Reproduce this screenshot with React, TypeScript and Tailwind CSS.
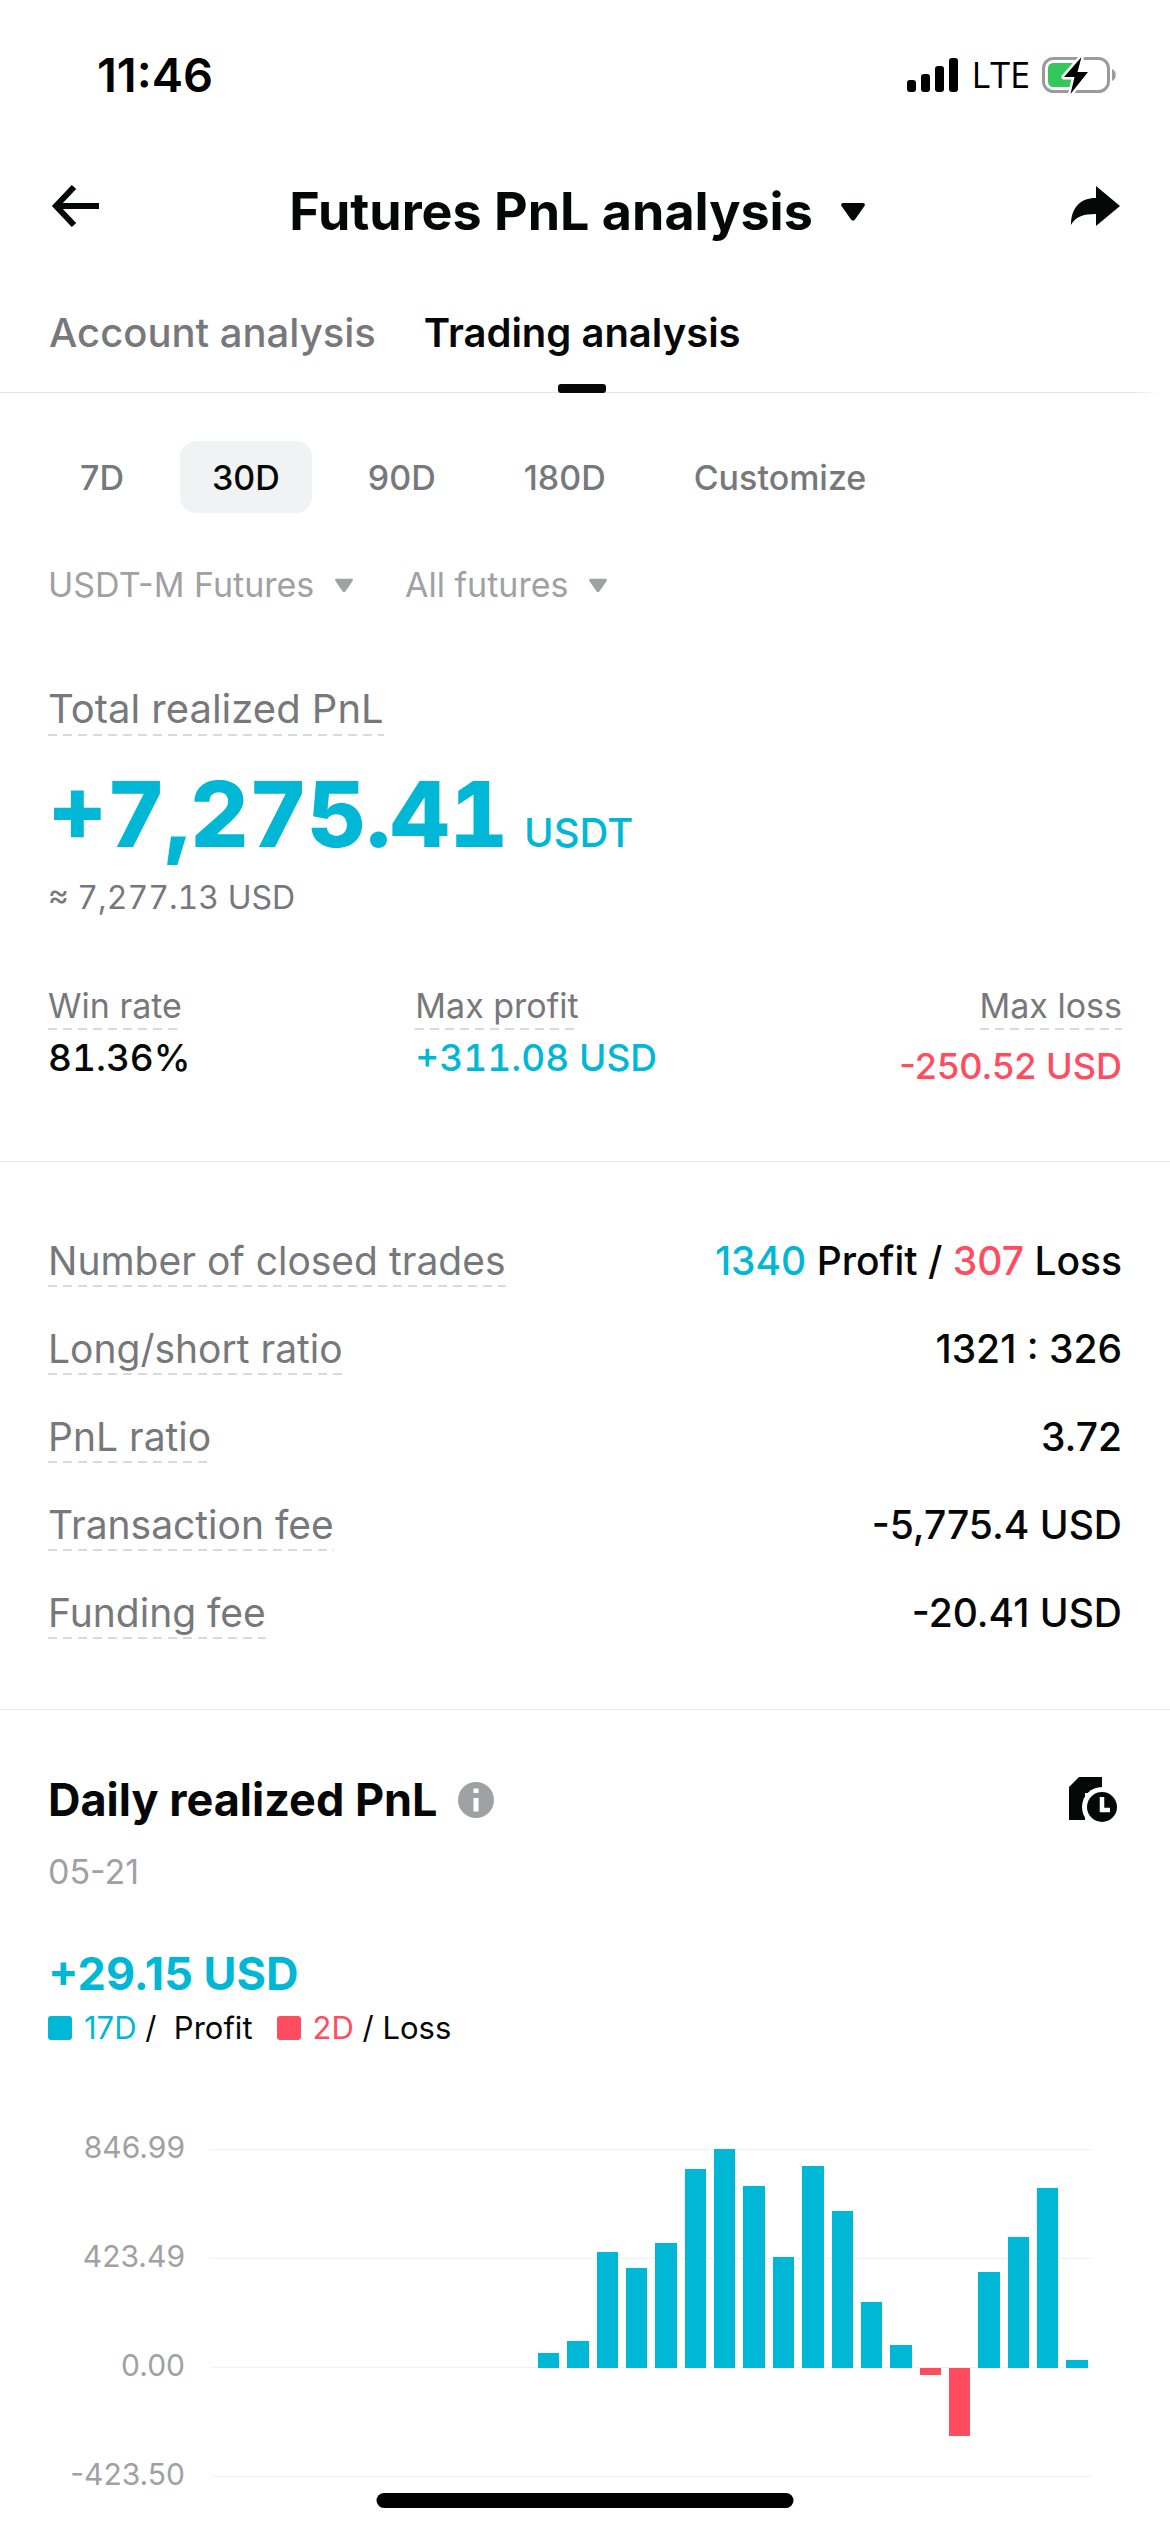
import React, { useState } from "react";
import clsx from "clsx";

const periods = ["7D", "30D", "90D", "180D", "Customize"];

const details = [
  { label: "Long/short ratio", value: "1321 : 326" },
  { label: "PnL ratio", value: "3.72" },
  { label: "Transaction fee", value: "-5,775.4 USD" },
  { label: "Funding fee", value: "-20.41 USD" },
];

const MAX = 846.99;
const axis = ["846.99", "423.49", "0.00", "-423.50"];

// last 30 days, oldest first
const daily = [
  0, 0, 0, 0, 0, 0, 0, 0, 0, 0, 0,
  57.1, 106.2, 447.4, 388.1, 482.5, 768.3, 846.99, 702.4, 428.2, 781.2,
  608, 253.6, 90.5, -26, -262.6, 370, 505.8, 696, 29.15,
];

function Caret({ className }: { className?: string }) {
  return (
    <svg viewBox="0 0 24 18" className={className} fill="currentColor" aria-hidden="true">
      <path d="M2 0h20c1.600 0 2.400 1.600 1.500 3L14 16.500c-1 1.500-3 1.500-4 0L.5 3C-.4 1.600.4 0 2 0z" />
    </svg>
  );
}

function Hint({ children, className }: { children: React.ReactNode; className?: string }) {
  return (
    <div className={clsx("w-fit text-[#77787c]", className)}>
      {children}
      <div className="h-[2px] bg-[repeating-linear-gradient(90deg,#d9dadd_0_9px,transparent_9px_15px)]" />
    </div>
  );
}

function StatusBar() {
  return (
    <div className="flex h-[150px] items-center justify-between pr-[52px] pl-[97px] text-black">
      <span className="text-[47px] leading-[48px] font-semibold">11:46</span>
      <div className="flex items-center">
        <svg className="h-[34px] w-[52px]" viewBox="0 0 52 34" aria-hidden="true">
          <rect x="0" y="22" width="9" height="12" rx="3" />
          <rect x="14" y="16" width="9" height="18" rx="3" />
          <rect x="28" y="8" width="9" height="26" rx="3" />
          <rect x="42" y="0" width="9" height="34" rx="3" />
        </svg>
        <span className="ml-3 font-['Open_Sans',sans-serif] text-[36px] leading-[48px] font-medium">LTE</span>
        <svg className="ml-3 h-[38px] w-[76px]" viewBox="0 0 76 38" aria-hidden="true">
          <rect x="1.500" y="2.500" width="65" height="33" rx="10" fill="none" stroke="#9b9b9d" strokeWidth="3" />
          <path d="M70 13c5 1.500 5 10.500 0 12z" fill="#9b9b9d" />
          <path d="M12 7h24v24H12c-4 0-6-2-6-6V13c0-4 2-6 6-6z" fill="#34c759" />
          <path d="M39.500 1 22 21h10.500l-4 17L46 16H35.500z" fill="#000" stroke="#fff" strokeWidth="5" strokeLinejoin="round" paintOrder="stroke" />
        </svg>
      </div>
    </div>
  );
}

function Chart() {
  return (
    <div className="mt-[82px] flex">
      <div className="w-[137px] shrink-0 text-right text-[30px] text-[#9fa1a5]">
        {axis.map((tick) => (
          <div key={tick} className="h-[109px] leading-[38px]">{tick}</div>
        ))}
      </div>
      <div className="relative mt-[21px] mr-[30px] ml-[26px] h-[328px] flex-1">
        <div className="absolute inset-0 flex flex-col justify-between">
          {axis.map((tick) => (
            <div key={tick} className="h-px bg-[#f0f1f3]" />
          ))}
        </div>
        <div className="relative flex h-full">
          {daily.map((value, i) => (
            <div key={i} className="flex flex-1 flex-col px-[4px]">
              <div className="flex h-[219px] items-end">
                {value > 0 && (
                  <div className="w-full bg-[#00b8d6]" style={{ height: `${(value / MAX) * 100}%` }} />
                )}
              </div>
              <div className="h-[109px]">
                {value < 0 && (
                  <div className="w-full bg-[#ff4c5f]" style={{ height: `${(-value / MAX) * 200}%` }} />
                )}
              </div>
            </div>
          ))}
        </div>
      </div>
    </div>
  );
}

export default function App() {
  const [tab, setTab] = useState("Trading analysis");
  const [period, setPeriod] = useState("30D");

  return (
    <main className="min-h-screen bg-white font-['Inter',sans-serif] text-[#060808]">
      <StatusBar />

      <header className="flex h-[124px] items-center justify-between px-[50px]">
        <button type="button" aria-label="Back" className="mb-3">
          <svg className="h-[42px] w-[49px]" viewBox="0 0 49 42" fill="none" stroke="currentColor" strokeWidth="6" aria-hidden="true">
            <path d="M49 21H7M24 2 6 21l18 19" />
          </svg>
        </button>
        <h1 className="text-[52px] leading-[64px] font-bold">
          <button type="button" className="flex items-center gap-7 pr-4">
            Futures PnL analysis
            <Caret className="h-[18px] w-[24px]" />
          </button>
        </h1>
        <button type="button" aria-label="Share" className="mb-3">
          <svg className="h-[40px] w-[49px]" viewBox="0 0 49 40" fill="currentColor" aria-hidden="true">
            <path d="M25 0 49 20 25 40V28C12 28 4 31 0 39 0 22 9 12 25 12z" />
          </svg>
        </button>
      </header>

      <nav role="tablist" className="flex h-[118px] gap-12 px-[49px] text-[40px]">
        {["Account analysis", "Trading analysis"].map((name) => (
          <button
            key={name}
            type="button"
            role="tab"
            aria-selected={tab === name}
            onClick={() => setTab(name)}
            className={clsx("relative", tab === name ? "font-semibold" : "font-medium text-[#77787c]")}
          >
            {name}
            {tab === name && (
              <span className="absolute -bottom-px left-1/2 h-[9px] w-12 -translate-x-1/2 rounded-[3px] bg-[#060808]" />
            )}
          </button>
        ))}
      </nav>
      <div className="h-px bg-linear-to-r from-[#e4e5e6] from-97% to-transparent to-99%" />

      <section className="border-b border-[#e9eaeb] px-12 pb-[71px]">
        <div className="mt-12 flex gap-6">
          {periods.map((name) => (
            <button
              key={name}
              type="button"
              aria-pressed={period === name}
              onClick={() => setPeriod(name)}
              className={clsx(
                "h-[72px] rounded-2xl px-8 text-[34px] font-medium",
                period === name ? "bg-[#f1f2f4]" : "text-[#77787c]"
              )}
            >
              {name}
            </button>
          ))}
        </div>

        <div className="mt-12 flex gap-[52px] text-[34px] leading-[48px] text-[#9fa1a5]">
          <label className="flex items-center gap-5">
            <select aria-label="Futures type" className="h-12 appearance-none bg-transparent">
              <option>USDT-M Futures</option>
            </select>
            <Caret className="h-[15px] w-[18px]" />
          </label>
          <label className="flex items-center gap-5">
            <select aria-label="Contract" className="h-12 appearance-none bg-transparent">
              <option>All futures</option>
            </select>
            <Caret className="h-[15px] w-[18px]" />
          </label>
        </div>

        <Hint className="mt-[75px] text-[40px] leading-[50px]">Total realized PnL</Hint>
        <div className="mt-[34px] flex items-baseline gap-4 text-[#00b8d6]">
          <span className="text-[91px] leading-[88px] font-extrabold tabular-nums">+7,275.41</span>
          <span className="text-[40px] leading-[48px] font-medium">USDT</span>
        </div>
        <p className="mt-4 text-[32px] leading-[48px] text-[#77787c] tabular-nums">≈ 7,277.13 USD</p>

        <div className="mt-[62px] grid grid-cols-3 gap-x-[28px]">
          <div>
            <Hint className="text-[34px] leading-[44px]">Win rate</Hint>
            <p className="mt-1 text-[37px] leading-[48px] font-medium tabular-nums">81.36%</p>
          </div>
          <div>
            <Hint className="text-[34px] leading-[44px]">Max profit</Hint>
            <p className="mt-1 text-[37px] leading-[48px] font-medium text-[#00b8d6] tabular-nums">+311.08 USD</p>
          </div>
          <div className="flex flex-col items-end">
            <Hint className="text-[34px] leading-[44px]">Max loss</Hint>
            <p className="mt-3 text-[36px] leading-[48px] font-medium text-[#ff4c5f]">-250.52 USD</p>
          </div>
        </div>
      </section>

      <section className="flex flex-col gap-[38px] border-b border-[#e9eaeb] px-12 pt-[75px] pb-[70px] text-[39px] leading-[48px]">
        <div className="flex justify-between">
          <Hint>Number of closed trades</Hint>
          <span className="font-medium">
            <span className="text-[#00b8d6]">1340</span> Profit / <span className="text-[#ff4c5f]">307</span> Loss
          </span>
        </div>
        {details.map((row) => (
          <div key={row.label} className="flex justify-between">
            <Hint>{row.label}</Hint>
            <span className="font-medium">{row.value}</span>
          </div>
        ))}
      </section>

      <section className="px-12 pt-[62px]">
        <div className="flex items-center justify-between">
          <div className="flex items-center gap-5">
            <h2 className="text-[45px] leading-[56px] font-bold">Daily realized PnL</h2>
            <button type="button" aria-label="About daily realized PnL">
              <svg className="h-9 w-9" viewBox="0 0 36 36" aria-hidden="true">
                <circle cx="18" cy="18" r="18" fill="#9fa1a5" />
                <path d="M15.500 6.500h5v4.500h-5zM15.500 16h5v13.500h-5z" fill="#fff" />
              </svg>
            </button>
          </div>
          <button type="button" aria-label="History" className="pr-1">
            <svg className="h-[48px] w-[50px]" viewBox="0 0 50 48" aria-hidden="true">
              <path d="M11 1h23v16H17v27H1V11z" fill="#060808" />
              <circle cx="34" cy="31" r="20" fill="#fff" />
              <circle cx="34" cy="31" r="15" fill="#060808" />
              <path d="M34 21v13h8" fill="none" stroke="#fff" strokeWidth="4.500" />
            </svg>
          </button>
        </div>
        <p className="mt-6 text-[34px] leading-[40px] text-[#9fa1a5]">05-21</p>
        <p className="mt-[54px] text-[45px] leading-[56px] font-bold text-[#00b8d6]">+29.15 USD</p>
        <div className="mt-2 flex items-center text-[31px] leading-[36px]">
          <span className="h-6 w-6 rounded-[3px] bg-[#00b8d6]" />
          <span className="ml-3 whitespace-pre"><span className="text-[#00b8d6]">17D</span> /  Profit</span>
          <span className="ml-6 h-6 w-6 rounded-[3px] bg-[#ff4c5f]" />
          <span className="ml-3"><span className="text-[#ff4c5f]">2D</span> / Loss</span>
        </div>
        <Chart />
      </section>

      <div className="fixed bottom-6 left-1/2 h-[15px] w-[417px] -translate-x-1/2 rounded-full bg-black" />
    </main>
  );
}
